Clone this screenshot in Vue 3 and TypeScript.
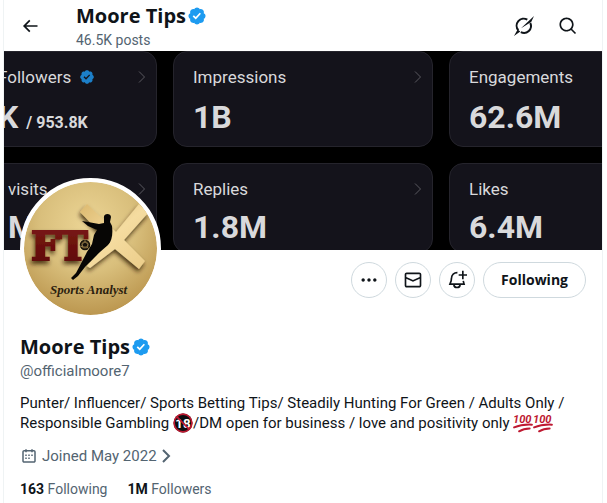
<script setup lang="ts">
interface Metric {
  label: string
  value: string
  suffix?: string
  verified?: boolean
}

const metrics: Metric[] = [
  { label: 'Followers', value: 'K', suffix: '/ 953.8K', verified: true },
  { label: 'Impressions', value: '1B' },
  { label: 'Engagements', value: '62.6M' },
  { label: 'visits', value: 'M' },
  { label: 'Replies', value: '1.8M' },
  { label: 'Likes', value: '6.4M' },
]

const badgePath =
  'M20.396 11c-.018-.646-.215-1.275-.57-1.816-.354-.54-.852-.972-1.438-1.246.223-.607.27-1.264.14-1.897-.131-.634-.437-1.218-.882-1.687-.47-.445-1.053-.75-1.687-.882-.633-.13-1.29-.083-1.897.14-.273-.587-.704-1.086-1.245-1.44S11.647 1.62 11 1.604c-.646.017-1.273.213-1.813.568s-.969.854-1.24 1.44c-.608-.223-1.267-.272-1.902-.14-.635.13-1.22.436-1.69.882-.445.47-.749 1.055-.878 1.688-.13.633-.08 1.29.144 1.896-.587.274-1.087.705-1.443 1.245-.356.54-.555 1.17-.574 1.817.02.647.218 1.276.574 1.817.356.54.856.972 1.443 1.245-.224.606-.274 1.263-.144 1.896.13.634.433 1.218.877 1.688.47.443 1.054.747 1.687.878.633.132 1.29.084 1.897-.136.274.586.705 1.084 1.246 1.439.54.354 1.17.551 1.816.569.647-.016 1.276-.213 1.817-.567s.972-.854 1.245-1.44c.604.239 1.266.296 1.903.164.636-.132 1.22-.447 1.68-.907.46-.46.776-1.044.908-1.681s.075-1.299-.165-1.903c.586-.274 1.084-.705 1.439-1.246.354-.54.551-1.17.569-1.816zM9.662 14.85l-3.429-3.428 1.293-1.302 2.072 2.072 4.4-4.794 1.347 1.246z'
</script>

<template>
  <main class="column">
    <header class="topbar">
      <button class="plain" type="button" aria-label="Back">
        <svg viewBox="0 0 24 24" width="20" height="20"><path d="M7.414 13l5.043 5.04-1.414 1.42L3.586 12l7.457-7.46 1.414 1.42L7.414 11H21v2H7.414z" /></svg>
      </button>
      <div class="heading">
        <h2 class="name">Moore Tips
          <svg class="badge" viewBox="0 0 22 22" width="20" height="20"><path :d="badgePath" /></svg>
        </h2>
        <p class="posts">46.5K posts</p>
      </div>
      <button class="plain" type="button" aria-label="Profile summary">
        <svg viewBox="0 0 24 24" width="24" height="24">
          <path d="M15.300 5.700A7 7 0 0 0 6.300 16.200M18.300 9A7 7 0 0 1 8.800 18.200" fill="none" stroke="currentColor" stroke-width="2" />
          <path d="M22 2L9 14.300 19.200 8zM2 22L5.600 15.500 8.300 17.600z" />
        </svg>
      </button>
      <button class="plain" type="button" aria-label="Search">
        <svg viewBox="0 0 24 24" width="20" height="20"><path d="M10.25 3.75c-3.59 0-6.5 2.91-6.5 6.5s2.91 6.5 6.5 6.5c1.795 0 3.419-.726 4.596-1.904 1.178-1.177 1.904-2.801 1.904-4.596 0-3.59-2.91-6.5-6.5-6.5zm-8.5 6.5c0-4.694 3.806-8.5 8.5-8.5s8.5 3.806 8.5 8.5c0 1.986-.682 3.815-1.824 5.262l4.781 4.781-1.414 1.414-4.781-4.781c-1.447 1.142-3.276 1.824-5.262 1.824-4.694 0-8.5-3.806-8.5-8.5z" /></svg>
      </button>
    </header>

    <section class="banner" aria-label="Account analytics">
      <article v-for="metric in metrics" :key="metric.label" class="card">
        <div class="card-head">
          <span>{{ metric.label }}</span>
          <svg v-if="metric.verified" class="badge muted" viewBox="0 0 22 22" width="16" height="16"><path :d="badgePath" /></svg>
          <svg class="chevron" viewBox="0 0 8 14" width="8" height="14"><path d="M1 1.500L6.500 7 1 12.500" /></svg>
        </div>
        <div class="card-value">{{ metric.value }}<small v-if="metric.suffix">{{ metric.suffix }}</small></div>
      </article>
    </section>

    <section class="profile">
      <div class="profile-top">
        <a class="avatar" href="#photo" aria-label="Profile photo">
          <svg viewBox="0 0 133 133">
            <defs>
              <radialGradient id="gold" cx="0.48" cy="0.32" r="0.72">
                <stop offset="0" stop-color="#ecd595" />
                <stop offset="0.5" stop-color="#d9bf7c" />
                <stop offset="1" stop-color="#b8924a" />
              </radialGradient>
              <linearGradient id="beam" x1="0" y1="0" x2="1" y2="1">
                <stop offset="0" stop-color="#dcb96f" />
                <stop offset="0.5" stop-color="#f5dca0" />
                <stop offset="1" stop-color="#ebcc88" />
              </linearGradient>
              <linearGradient id="red" x1="0" y1="0" x2="0" y2="1">
                <stop offset="0" stop-color="#7c1a16" />
                <stop offset="1" stop-color="#5c0807" />
              </linearGradient>
              <filter id="shade" x="-20%" y="-20%" width="140%" height="150%">
                <feDropShadow dx="-1" dy="3" stdDeviation="2" flood-color="#2c1c02" flood-opacity="0.8" />
              </filter>
            </defs>
            <rect width="133" height="133" fill="url(#gold)" />
            <g filter="url(#shade)">
              <path d="M63 22L92 50 115 22 124 31 100 58 121 79 115 87 91 67 66 86 63 84 83 58 56 30z" fill="url(#beam)" />
            </g>
            <g filter="url(#shade)">
              <text x="7" y="78" class="logo-letters" fill="url(#red)" stroke="url(#red)">F</text>
              <text x="34" y="78" class="logo-letters" fill="url(#red)" stroke="url(#red)">T</text>
            </g>
            <circle cx="61" cy="63" r="4.500" fill="#574420" stroke="#15110b" stroke-width="1.500" />
            <path d="M58 62l3-2 3 2-1 3h-4zM61 57v3M56 64l3 1M63 65l2 2" fill="#17110b" stroke="#c0a266" stroke-width="0.600" />
            <path d="M80 36C79 31 87 31 87 35L86 40 88 44C89 52 88 59 84 63L76 70C70 76 66 80 61 85L54 94 49 98 47 96 52 91 62 72C63 69 66 66 68 62L70 53 73 48 64 44 58 39 64 40 75 42 80 41z" fill="#070605" />
            <text x="26" y="112" class="logo-caption">Sports Analyst</text>
          </svg>
        </a>
        <div class="actions">
          <button class="round" type="button" aria-label="More">
            <svg viewBox="0 0 24 24" width="20" height="20"><path d="M3 12c0-1.100.9-2 2-2s2 .9 2 2-.9 2-2 2-2-.9-2-2zm9 2c1.100 0 2-.9 2-2s-.9-2-2-2-2 .9-2 2 .9 2 2 2zm7 0c1.100 0 2-.9 2-2s-.9-2-2-2-2 .9-2 2 .9 2 2 2z" /></svg>
          </button>
          <button class="round" type="button" aria-label="Message">
            <svg viewBox="0 0 24 24" width="20" height="20"><path d="M1.998 5.500c0-1.381 1.119-2.500 2.500-2.500h15c1.381 0 2.500 1.119 2.500 2.500v13c0 1.381-1.119 2.500-2.500 2.500h-15c-1.381 0-2.500-1.119-2.500-2.500v-13zm2.500-.5c-.276 0-.5.224-.5.500v2.764l8 3.638 8-3.636V5.500c0-.276-.224-.5-.5-.5h-15zm15.500 5.463l-8 3.636-8-3.638V18.500c0 .276.224.5.5.500h15c.276 0 .5-.224.5-.5v-8.037z" /></svg>
          </button>
          <button class="round" type="button" aria-label="Notify">
            <svg viewBox="0 0 24 24" width="20" height="20"><path d="M12.500 3.100C8.300 3 5.700 5.900 5.400 9.500L5 13 3.500 17H20.500L19.500 13M8.200 18c.8 4 6.800 4 7.600 0" fill="none" stroke="currentColor" stroke-width="2" /><path d="M18 1h2v4h4v2h-4v4h-2V7h-4V5h4z" /></svg>
          </button>
          <button class="following" type="button">Following</button>
        </div>
      </div>

      <div class="identity">
        <h1 class="name">Moore Tips
          <svg class="badge" viewBox="0 0 22 22" width="20" height="20"><path :d="badgePath" /></svg>
        </h1>
        <p class="secondary">@officialmoore7</p>
      </div>

      <p class="bio">
        Punter/ Influencer/ Sports Betting Tips/ Steadily Hunting For Green / Adults Only / Responsible Gambling
        <svg class="emoji" viewBox="0 0 36 36" width="20" height="20" role="img" aria-label="Adults only">
          <circle cx="18" cy="18" r="17" fill="#0d0d0f" />
          <text x="18" y="27" text-anchor="middle" class="eighteen">18</text>
          <circle cx="18" cy="18" r="16" fill="none" stroke="#be1931" stroke-width="3" />
          <path d="M7 7L29 29" stroke="#be1931" stroke-width="3" />
        </svg>/DM open for business / love and positivity only
        <span class="hundreds"><svg v-for="n in 2" :key="n" class="emoji" viewBox="0 0 36 36" width="20" height="20" role="img" aria-label="100">
          <text x="0" y="18" class="hundred">100</text>
          <path d="M2 26Q16 20 34 21M11 33Q19 28 30 28" fill="none" stroke="#be1931" stroke-width="3.500" stroke-linecap="round" />
        </svg></span>
      </p>

      <a class="joined" href="#about">
        <svg viewBox="0 0 24 24" width="18" height="18"><path d="M7 4V3h2v1h6V3h2v1h1.500C19.890 4 21 5.120 21 6.500v12c0 1.380-1.110 2.500-2.500 2.500h-13C4.120 21 3 19.880 3 18.500v-12C3 5.120 4.120 4 5.500 4H7zm0 2H5.500c-.27 0-.5.220-.5.500v12c0 .280.230.5.500.5h13c.280 0 .5-.220.5-.5v-12c0-.280-.220-.5-.5-.5H17v1h-2V6H9v1H7V6zm0 6h2v-2H7v2zm0 4h2v-2H7v2zm4-4h2v-2h-2v2zm0 4h2v-2h-2v2zm4-4h2v-2h-2v2z" /></svg>
        <span>Joined May 2022</span>
        <svg class="next" viewBox="0 0 10 14" width="10" height="14"><path d="M2 1l6 6-6 6" /></svg>
      </a>

      <nav class="stats" aria-label="Connections">
        <a href="#following"><b>163</b> Following</a>
        <a href="#followers"><b>1M</b> Followers</a>
      </nav>
    </section>
  </main>
</template>

<style>
body {
  margin: 0;
  background: #fff;
  overflow: hidden;
}
</style>

<style scoped>
.column {
  box-sizing: border-box;
  min-height: 100vh;
  margin: 0 4px 0 3px;
  border: solid #eff3f4;
  border-width: 0 1px;
  font-family: Roboto, "Liberation Sans", sans-serif;
  font-size: 15px;
  line-height: 20px;
  color: #0f1419;
}

h1, h2, p {
  margin: 0;
}

svg {
  flex: none;
  fill: currentColor;
}

button {
  font: inherit;
  color: inherit;
  padding: 0;
  cursor: pointer;
}

a {
  color: inherit;
  text-decoration: none;
}

.topbar {
  display: flex;
  align-items: center;
  height: 51px;
  padding: 0 16px 0 8px;
}

.plain {
  display: grid;
  place-items: center;
  width: 36px;
  height: 36px;
  border: 0;
  background: none;
}

.plain + .plain {
  margin-left: 8px;
}

.heading {
  flex: 1;
  padding-left: 28px;
}

.name {
  display: flex;
  align-items: center;
  gap: 1px;
  font-family: "Open Sans", Roboto, sans-serif;
  font-size: 20px;
  line-height: 24px;
  font-weight: 700;
}

.posts {
  padding-top: 4px;
  font-size: 14px;
  line-height: 16px;
  color: #536471;
}

.badge {
  fill: #1d9bf0;
}

.banner {
  display: grid;
  grid-template: 96px 90px / repeat(3, 260px);
  gap: 16px;
  justify-content: center;
  box-sizing: border-box;
  height: 199px;
  overflow: hidden;
  background: #000;
}

.card {
  box-sizing: border-box;
  padding: 13px 10px 0 19px;
  border: 1px solid #25242c;
  border-radius: 14px;
  background: #14131b;
  color: #d9d9db;
}

.card:nth-child(1) {
  padding-left: 100px;
}

.card:nth-child(4) {
  padding-left: 110px;
}

.card-head {
  display: flex;
  align-items: center;
  gap: 8px;
  font-size: 17px;
  line-height: 24px;
}

.badge.muted {
  fill: #1c7fc9;
}

.chevron {
  margin-left: auto;
  fill: none;
  stroke: #5a5960;
}

.card-value {
  padding-top: 8px;
  font-size: 32px;
  line-height: 36px;
  font-weight: 700;
}

.card:nth-child(-n + 3) .card-value {
  padding-top: 10px;
}

.card-value small {
  margin-left: 8px;
  font-size: 16px;
}

.profile {
  padding: 12px 16px;
}

.profile-top {
  display: flex;
  justify-content: space-between;
  align-items: flex-start;
}

.avatar {
  position: relative;
  width: 133px;
  height: 133px;
  margin-top: -84px;
  border: 4px solid #fff;
  border-radius: 50%;
  overflow: hidden;
  background: #fff;
}

.avatar svg {
  display: block;
  border-radius: 50%;
}

.logo-letters {
  font: 700 40px "DejaVu Serif", serif;
  stroke-width: 2;
}

.logo-caption {
  font: italic 700 13px "Liberation Serif", serif;
  fill: #2c210f;
}

.actions {
  display: flex;
  gap: 8px;
}

.round,
.following {
  box-sizing: border-box;
  height: 36px;
  border: 1px solid #cfd9de;
  border-radius: 18px;
  background: #fff;
}

.round {
  display: grid;
  place-items: center;
  width: 36px;
}

.following {
  padding: 0 17px;
  font-family: "Open Sans", Roboto, sans-serif;
  font-size: 14px;
  font-weight: 700;
}

.identity {
  padding-top: 16px;
}

.secondary {
  color: #536471;
  line-height: 24px;
}

.bio {
  padding-top: 10px;
}

.emoji {
  vertical-align: top;
}

.hundreds {
  white-space: nowrap;
}

.eighteen {
  font: 700 24px Roboto, sans-serif;
  fill: #fff;
}

.hundred {
  font: italic 700 20px Roboto, sans-serif;
  fill: #be1931;
}

.joined {
  display: flex;
  align-items: center;
  gap: 4px;
  padding-top: 13px;
  color: #536471;
}

.next {
  fill: none;
  stroke: currentColor;
  stroke-width: 2;
}

.stats {
  display: flex;
  gap: 20px;
  padding-top: 13px;
  font-size: 14px;
  color: #536471;
}

.stats b {
  color: #0f1419;
}
</style>
